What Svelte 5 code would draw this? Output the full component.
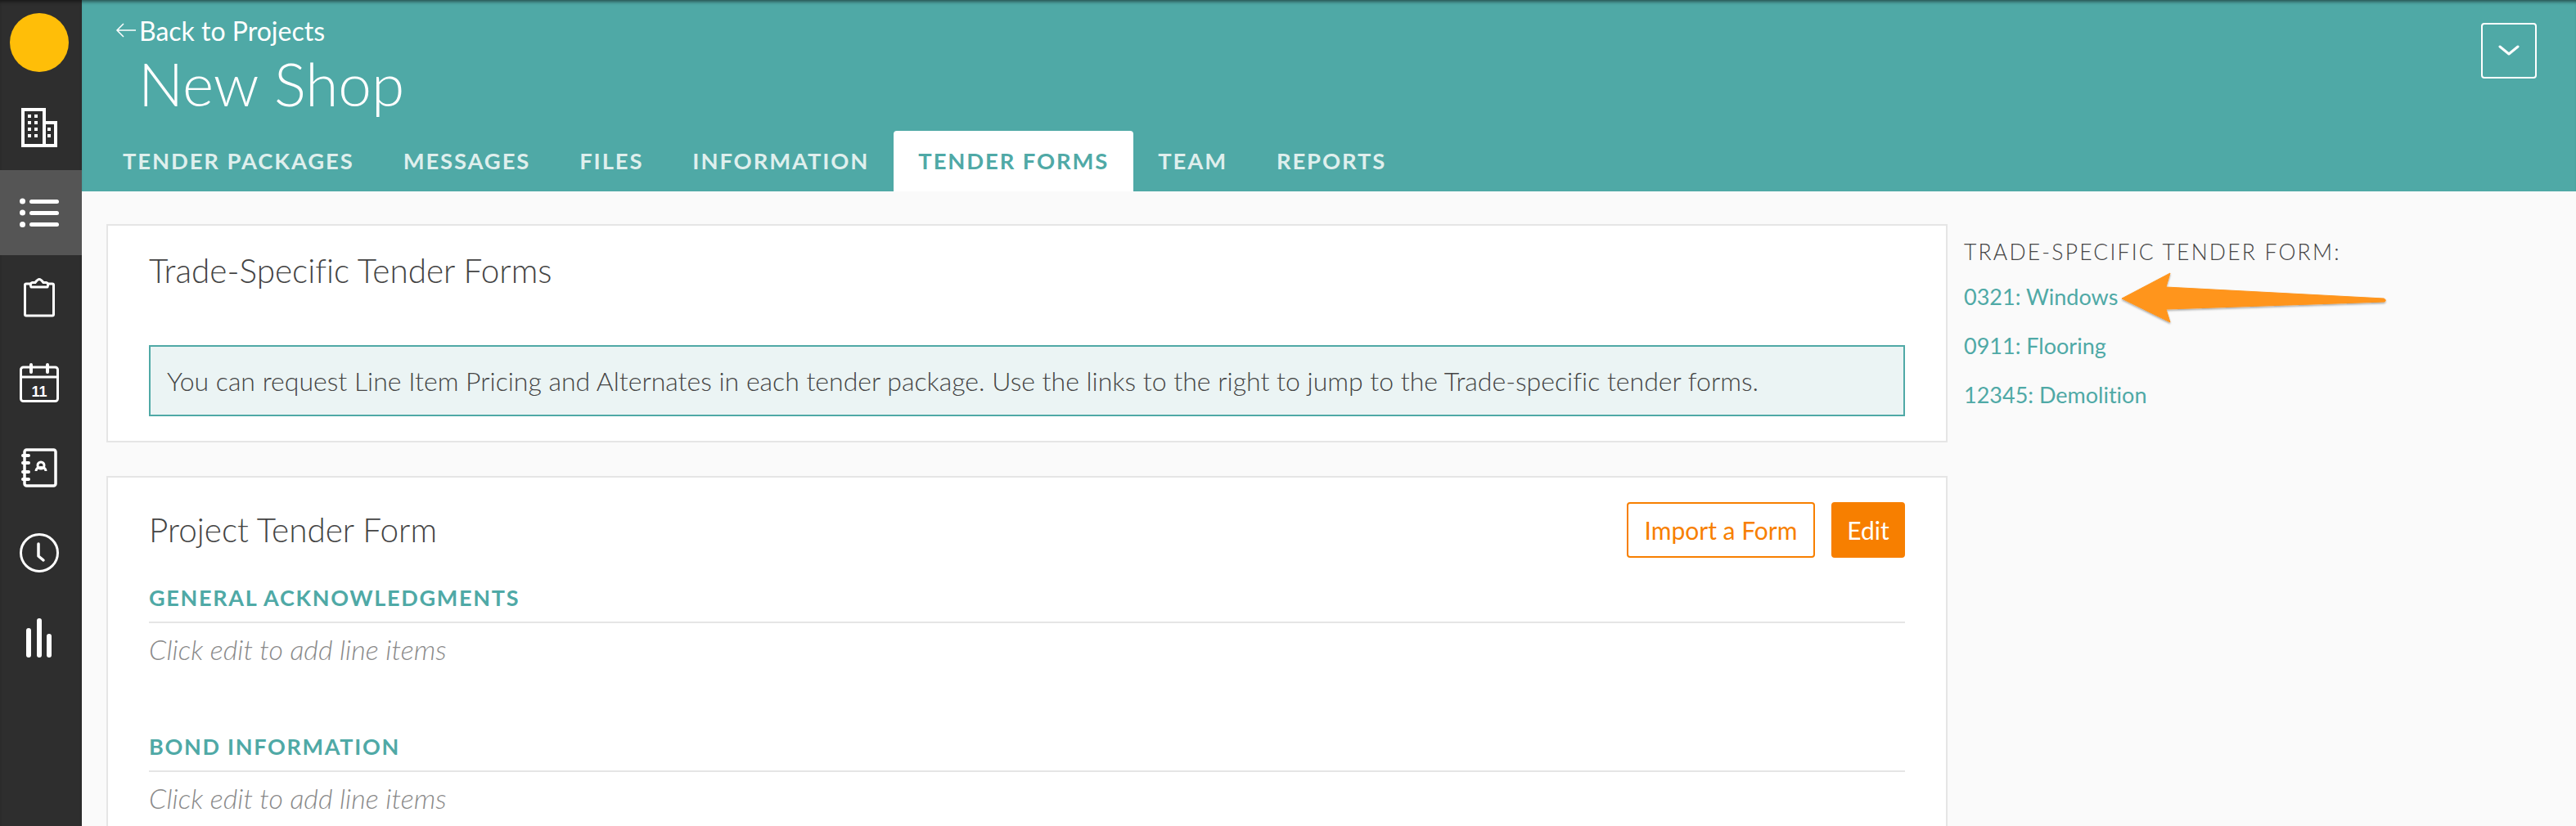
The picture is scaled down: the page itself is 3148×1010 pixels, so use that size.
<script>
  const tabs = ["TENDER PACKAGES", "MESSAGES", "FILES", "INFORMATION", "TENDER FORMS", "TEAM", "REPORTS"];
  const active = "TENDER FORMS";
  const trades = ["0321: Windows", "0911: Flooring", "12345: Demolition"];
  const sections = ["GENERAL ACKNOWLEDGMENTS", "BOND INFORMATION"];
</script>

<div class="app">
  <nav class="rail">
    <div class="rail-item"><span class="avatar"></span></div>
    <div class="rail-item">
      <svg width="44" height="48" viewBox="0 0 44 48" fill="none" stroke="#fff" stroke-width="4">
        <path d="M2 46V2h26v44zM28 18h14v28H28zM0 46h44" />
        <path stroke="none" fill="#fff" d="M8 8h4v4H8zM16 8h4v4h-4zM8 16h4v4H8zM16 16h4v4h-4zM8 24h4v4H8zM16 24h4v4h-4zM8 32h4v4H8zM16 32h4v4h-4zM32 24h4v4h-4zM32 32h4v4h-4z" />
      </svg>
    </div>
    <div class="rail-item on">
      <svg width="48" height="36" viewBox="0 0 48 36" fill="#fff">
        <circle cx="3.500" cy="4" r="3.500" /><circle cx="3.500" cy="18" r="3.500" /><circle cx="3.500" cy="32.500" r="3.500" />
        <rect x="12" y="2" width="36" height="5" rx="2.500" /><rect x="12" y="16" width="36" height="5" rx="2.500" /><rect x="12" y="30" width="36" height="5" rx="2.500" />
      </svg>
    </div>
    <div class="rail-item">
      <svg width="38" height="48" viewBox="0 0 38 48" fill="none" stroke="#fff" stroke-width="3" stroke-linejoin="round">
        <path d="M9 7H3a1.500 1.500 0 0 0-1.500 1.500v36A1.500 1.500 0 0 0 3 46h32a1.500 1.500 0 0 0 1.500-1.500v-36A1.500 1.500 0 0 0 35 7h-6" />
        <path d="M9 11h20c1.500-2.500.5-5-1.500-5.500H24C22.500 3.500 21 1.500 19 1.500s-3.500 2-5 4h-3.500C8.500 6 7.500 8.500 9 11z" />
      </svg>
    </div>
    <div class="rail-item">
      <svg width="48" height="48" viewBox="0 0 48 48" fill="none" stroke="#fff" stroke-width="3">
        <rect x="1.500" y="5" width="45" height="41.500" rx="3" />
        <path d="M1.500 17h45" />
        <path stroke-width="4" stroke-linecap="round" d="M14 2v9M34 2v9" />
        <text x="24" y="41" text-anchor="middle" class="cal">11</text>
      </svg>
    </div>
    <div class="rail-item">
      <svg width="44" height="48" viewBox="0 0 44 48" fill="none" stroke="#fff" stroke-width="3.500">
        <rect x="4" y="2" width="38" height="44" rx="2.500" />
        <path stroke-width="4" stroke-linecap="round" d="M2 9h7M2 18h7M2 29h7M2 38h7" />
        <circle cx="24" cy="21" r="4" stroke-width="3" />
        <path stroke-width="3" d="M18 28c0-3 2-4.500 6-4.500s6 1.500 6 4.500" />
      </svg>
    </div>
    <div class="rail-item">
      <svg width="48" height="48" viewBox="0 0 48 48" fill="none" stroke="#fff" stroke-width="3">
        <circle cx="24" cy="24" r="22.500" />
        <path stroke-width="3.500" stroke-linecap="round" stroke-linejoin="round" d="M23 13v15l6 5" />
      </svg>
    </div>
    <div class="rail-item">
      <svg width="32" height="48" viewBox="0 0 32 48" fill="#fff">
        <rect x="0" y="12" width="6" height="36" rx="3" /><rect x="13" y="0" width="6" height="48" rx="3" /><rect x="25" y="19" width="6" height="29" rx="3" />
      </svg>
    </div>
  </nav>

  <div class="page">
    <header class="top">
      <div class="top-row">
        <div>
          <a class="back" href="#back">
            <svg width="26" height="20" viewBox="0 0 26 20" fill="none" stroke="#fff" stroke-width="1.500"><path d="M25 10H2M10 2l-8 8 8 8" /></svg>
            Back to Projects
          </a>
          <h1>New Shop</h1>
        </div>
        <button class="more" aria-label="More">
          <svg width="26" height="14" viewBox="0 0 26 14" fill="none" stroke="#fff" stroke-width="3" stroke-linecap="round" stroke-linejoin="round"><path d="M2 2l11 9 11-9" /></svg>
        </button>
      </div>
      <div class="tabs">
        {#each tabs as tab}
          <a class="tab" class:sel={tab === active} href="#tab">{tab}</a>
        {/each}
      </div>
    </header>

    <div class="body">
      <main>
        <section class="card first">
          <h2>Trade-Specific Tender Forms</h2>
          <div class="note">You can request Line Item Pricing and Alternates in each tender package. Use the links to the right to jump to the Trade-specific tender forms.</div>
        </section>
        <section class="card second">
          <div class="card-head">
            <h2>Project Tender Form</h2>
            <div class="btns">
              <button class="btn ghost">Import a Form</button>
              <button class="btn solid">Edit</button>
            </div>
          </div>
          {#each sections as s}
            <div class="sec">
              <h3>{s}</h3>
              <p>Click edit to add line items</p>
            </div>
          {/each}
        </section>
      </main>

      <aside>
        <h4>TRADE-SPECIFIC TENDER FORM:</h4>
        {#each trades as t}
          <a class="trade" href="#trade">{t}</a>
        {/each}
        <svg class="arrow" width="330" height="70" viewBox="0 0 330 70">
          <defs>
            <filter id="sh" x="-5%" y="-15%" width="110%" height="135%">
              <feDropShadow dx="0" dy="1.500" stdDeviation="1" flood-color="#000" flood-opacity="0.35" />
            </filter>
          </defs>
          <path filter="url(#sh)" fill="#ff951c" stroke="#ff951c" stroke-width="1" stroke-linejoin="round" d="M3 35 62 4 57 21 323 35c3 1 3 4 0 4L57 48 62 64z" />
        </svg>
      </aside>
    </div>
  </div>
</div>

<style>
  :global(body) {
    margin: 0;
    background: #fafafa;
  }

  .app {
    display: flex;
    width: 3148px;
    height: 1010px;
    overflow: hidden;
    font-family: Lato, "Liberation Sans", sans-serif;
    font-variant-ligatures: none;
    color: #444;
  }

  .rail {
    flex: 0 0 100px;
    background: #2e2e2e;
    box-shadow: inset 0 4px 4px -2px rgba(0, 0, 0, 0.5);
  }

  .rail-item {
    height: 104px;
    padding-right: 4px;
    display: flex;
    align-items: center;
    justify-content: center;
  }

  .rail-item.on {
    background: #555;
  }

  .avatar {
    width: 72px;
    height: 72px;
    border-radius: 50%;
    background: #ffbe08;
  }

  .cal {
    font-family: "Liberation Sans", sans-serif;
    font-size: 18px;
    font-weight: 700;
    fill: #fff;
    stroke: none;
  }

  .page {
    flex: 1;
    min-width: 0;
  }

  .top {
    height: 234px;
    box-sizing: border-box;
    padding-top: 4px;
    background: #4fa9a6;
    box-shadow: inset 0 5px 4px -3px rgba(0, 0, 0, 0.55);
    display: flex;
    flex-direction: column;
    justify-content: space-between;
  }

  .top-row {
    display: flex;
    justify-content: space-between;
    align-items: flex-start;
    padding: 11px 48px 0 41px;
  }

  .back {
    display: flex;
    align-items: center;
    gap: 3px;
    height: 44px;
    color: #fff;
    font-size: 32px;
    text-decoration: none;
  }

  h1 {
    margin: 5px 0 0 28px;
    font-size: 73px;
    line-height: 76px;
    font-weight: 300;
    color: #fff;
  }

  .more {
    margin-top: 13px;
    width: 68px;
    height: 68px;
    padding: 0;
    background: none;
    border: 2px solid #fff;
    border-radius: 4px;
    display: flex;
    align-items: center;
    justify-content: center;
  }

  .tabs {
    display: flex;
    padding-left: 20px;
  }

  .tab {
    height: 74px;
    padding: 0 30px 2px;
    box-sizing: border-box;
    display: flex;
    align-items: center;
    color: #dfefed;
    font-size: 27.400px;
    font-weight: 700;
    letter-spacing: 1.900px;
    text-decoration: none;
    border-radius: 4px 4px 0 0;
  }

  .tab.sel {
    background: #fff;
    color: #4fa9a6;
  }

  .body {
    display: flex;
    padding: 40px 0 0 30px;
  }

  main {
    flex: 0 0 2250px;
    display: flex;
    flex-direction: column;
    gap: 41px;
  }

  .card {
    box-sizing: border-box;
    background: #fff;
    border: 2px solid #e5e5e5;
    padding: 0 50px;
  }

  .first {
    height: 267px;
    padding-top: 29px;
  }

  h2 {
    margin: 0;
    font-size: 40.500px;
    line-height: 52px;
    font-weight: 300;
    color: #444;
  }

  .note {
    margin-top: 65px;
    height: 87px;
    box-sizing: border-box;
    padding-left: 20px;
    display: flex;
    align-items: center;
    background: #ebf4f4;
    border: 2px solid #4fa9a6;
    font-size: 32px;
    font-weight: 300;
    white-space: nowrap;
  }

  .second {
    height: 600px;
    padding-top: 30px;
  }

  .card-head {
    display: flex;
    justify-content: space-between;
    align-items: center;
  }

  .btns {
    display: flex;
    gap: 20px;
  }

  .btn {
    height: 68px;
    border-radius: 4px;
    border: 2px solid #f77f00;
    font: inherit;
    font-size: 30px;
    padding: 0;
  }

  .ghost {
    width: 230px;
    background: #fff;
    color: #f77f00;
  }

  .solid {
    width: 90px;
    background: #f77f00;
    color: #fff;
  }

  .sec h3 {
    margin: 0;
    height: 80px;
    box-sizing: border-box;
    padding-top: 34px;
    border-bottom: 2px solid #e5e5e5;
    color: #4fa9a6;
    font-size: 27px;
    font-weight: 700;
    letter-spacing: 1.700px;
    line-height: 30px;
  }

  .sec {
    margin-bottom: 52px;
  }

  .sec p {
    margin: 14px 0 0;
    font-size: 34px;
    line-height: 36px;
    font-style: italic;
    font-weight: 300;
    color: #8a8a8a;
  }

  aside {
    position: relative;
    padding: 17px 0 0 20px;
  }

  h4 {
    margin: 0 0 8px;
    font-size: 26.500px;
    line-height: 34px;
    font-weight: 300;
    letter-spacing: 2.200px;
    color: #444;
    white-space: nowrap;
  }

  .trade {
    display: block;
    height: 60px;
    line-height: 60px;
    font-size: 27px;
    color: #4fa9a6;
    text-decoration: none;
  }

  .arrow {
    position: absolute;
    left: 210px;
    top: 56px;
  }
</style>
